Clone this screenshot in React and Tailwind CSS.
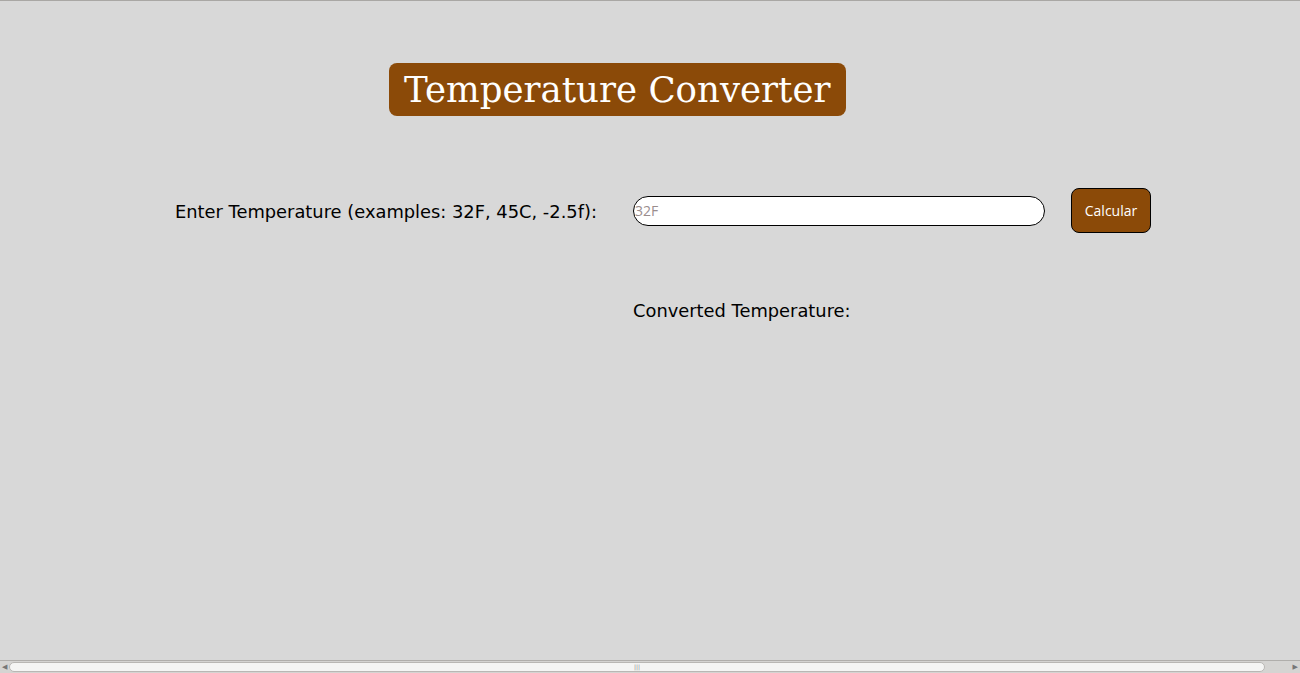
export default function App() {
  return (
    <div className="h-[673px] w-full bg-[#d8d8d8] border-t border-[#a9a7a4] flex flex-col overflow-hidden" style={{ fontFamily: '"DejaVu Sans", sans-serif' }}>
      <div className="flex-1">
        {/* Title */}
        <div className="pt-[62px] pl-[389px]">
          <h1 className="inline-block bg-[#8b4a08] text-white rounded-lg pl-[15px] pr-[16px] h-[53px] leading-[54px] text-[35.6px] font-['DejaVu_Serif',serif]">
            Temperature Converter
          </h1>
        </div>

        {/* Form */}
        <div className="flex items-center mt-[72px] h-[45px]">
          <label className="pl-[175px] pt-[3px] w-[633px] text-[17.85px] text-black">
            Enter Temperature (examples: 32F, 45C, -2.5f):
          </label>
          <input
            type="text"
            placeholder="32F"
            className="w-[412px] h-[30px] bg-white border border-black rounded-full px-[1px] text-[14px] placeholder-[#9a8d8d] font-['Open_Sans',sans-serif] outline-none"
          />
          <button className="ml-[26px] w-[80px] h-[45px] bg-[#8b4a08] border border-black rounded-lg text-white text-[14px] font-['Open_Sans',sans-serif]">
            Calcular
          </button>
        </div>

        {/* Result */}
        <div className="pl-[633px] mt-[65px] text-[17.85px] text-black">Converted Temperature:</div>
      </div>

      {/* Scrollbar */}
      <div className="h-[13px] bg-[#d5d4d2] border-t border-[#b0aeab] flex items-center px-[2px] gap-[2px]">
        <span className="text-[7px] text-[#777]">◀</span>
        <div className="flex-1 h-[10px] rounded-full bg-[#f5f5f4] border border-[#b9b7b4] flex items-center justify-center">
          <span className="text-[6px] text-[#888] leading-none">|||</span>
        </div>
        <div className="w-[24px]" />
        <span className="text-[7px] text-[#777]">▶</span>
      </div>
    </div>
  );
}
